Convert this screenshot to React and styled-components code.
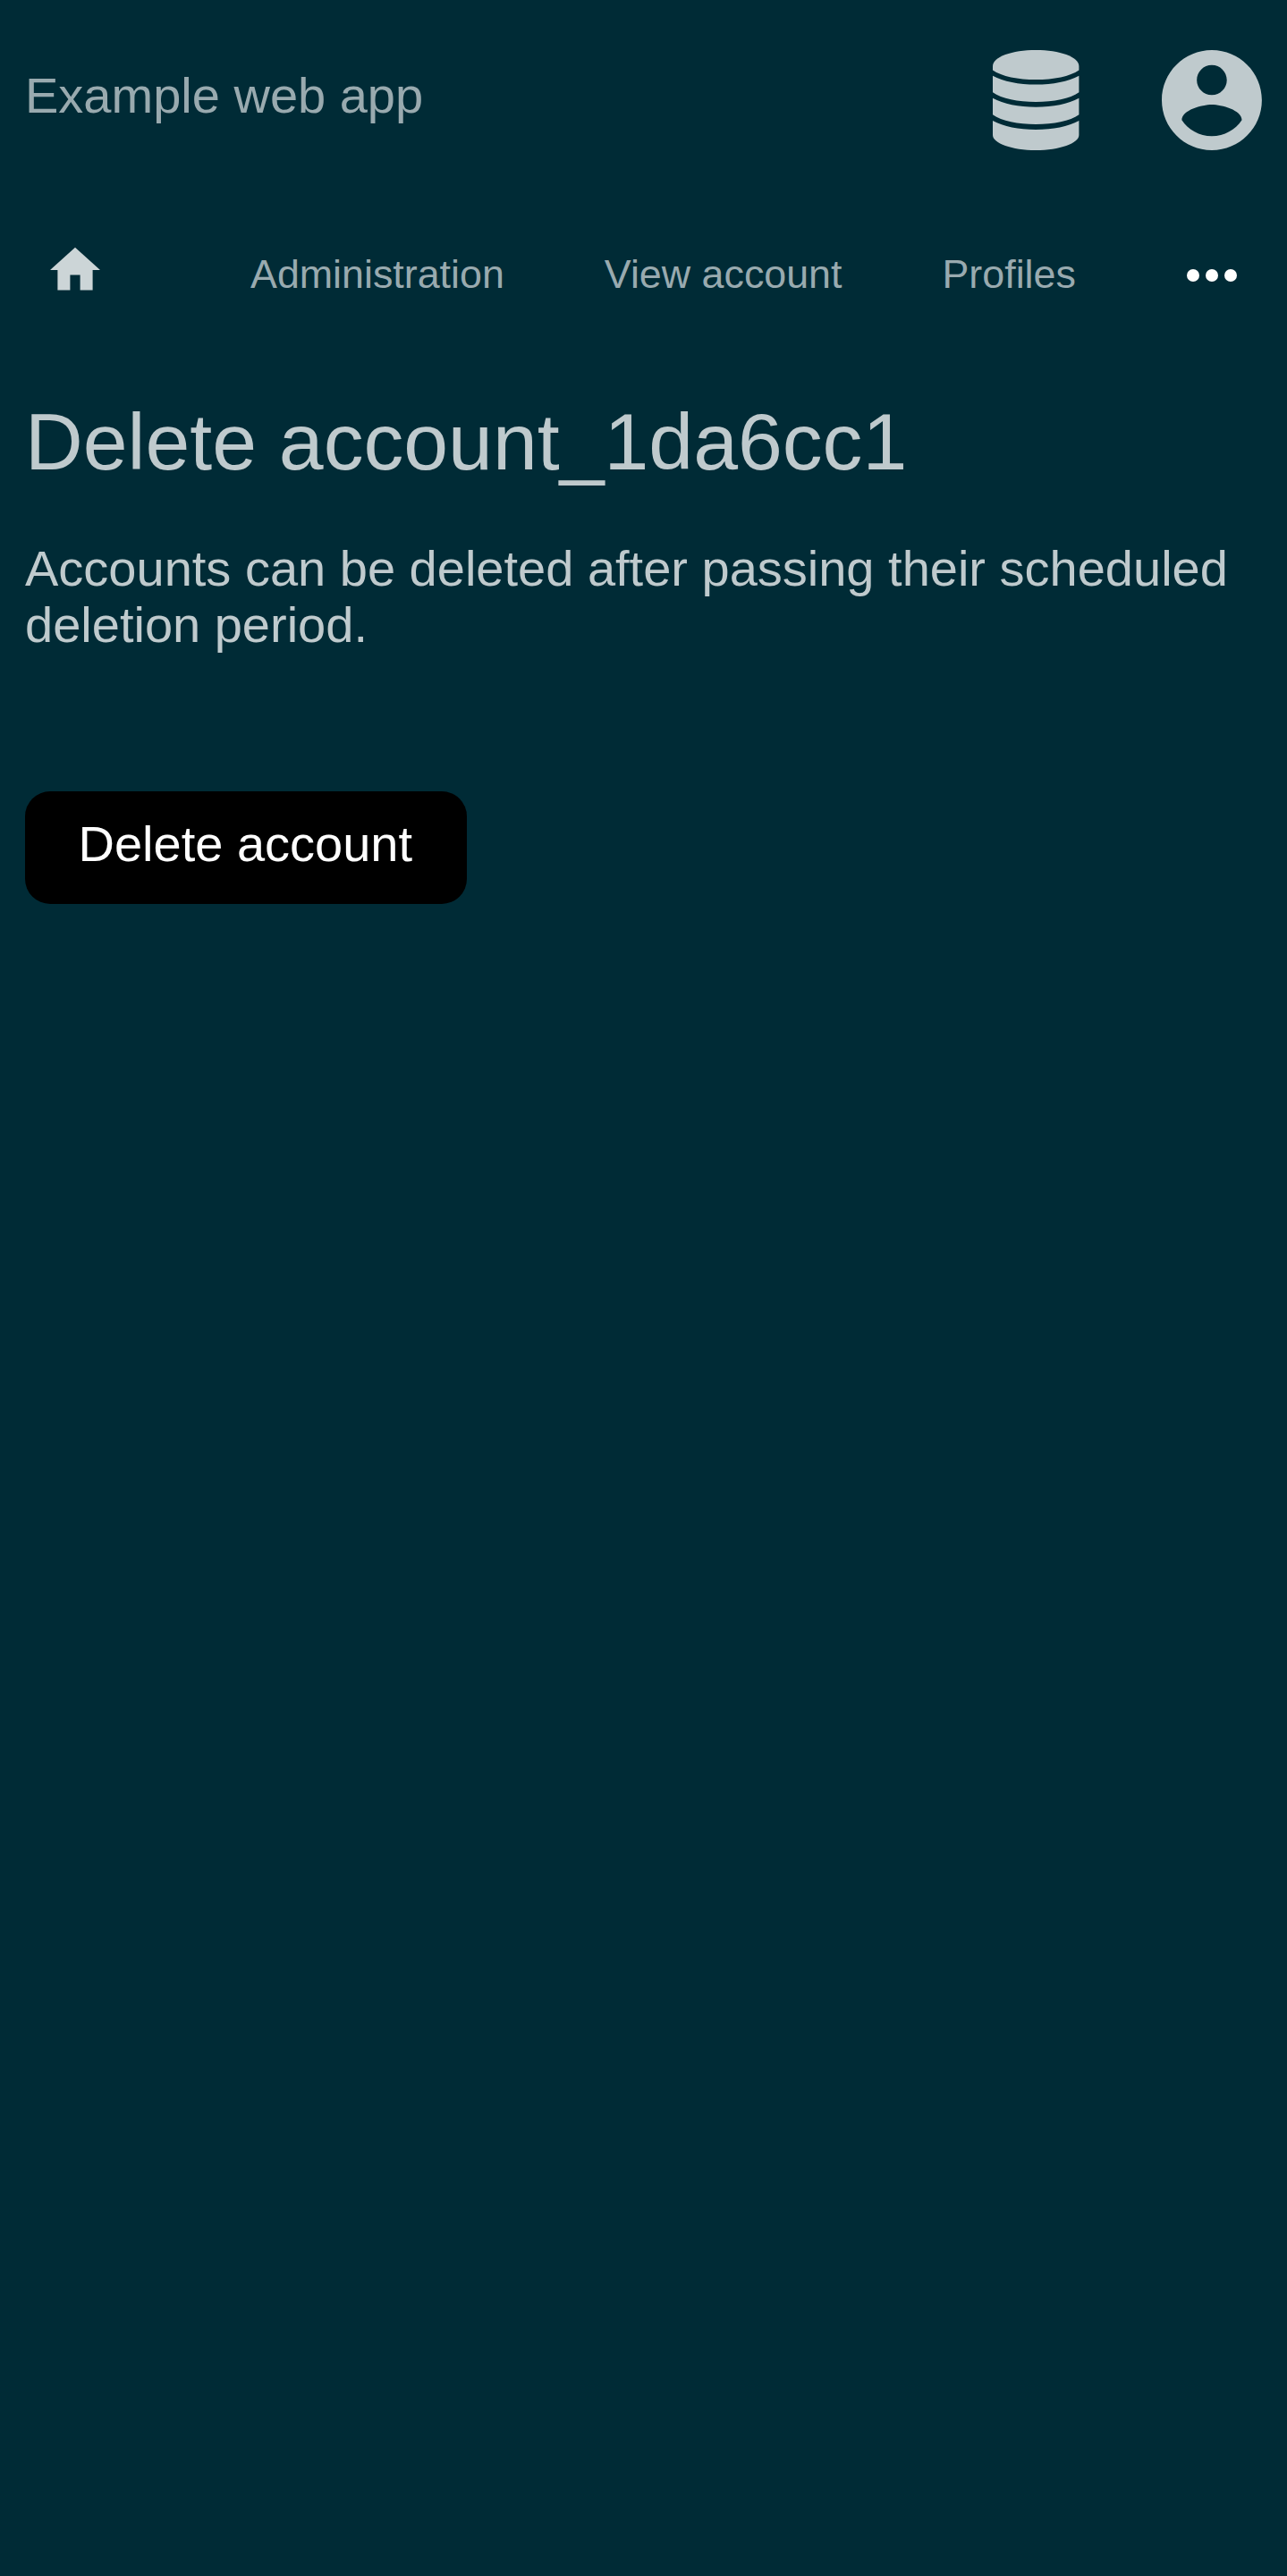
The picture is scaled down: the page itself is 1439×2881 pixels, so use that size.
import React from 'react';
import styled, { createGlobalStyle } from 'styled-components';

const GlobalStyle = createGlobalStyle`
  body {
    margin: 0;
    background: #002b36;
    color: #bfcacd;
    font-family: "Liberation Sans", Arial, sans-serif;
    font-size: 56px;
    line-height: 63px;
  }
`;

const Page = styled.div`
  min-height: 2881px;
  box-sizing: border-box;
`;

const Header = styled.header`
  display: flex;
  align-items: flex-start;
  justify-content: space-between;
  height: 224px;
  padding: 56px 28.3px 56px 28px;
  box-sizing: border-box;
`;

const Brand = styled.a`
  margin-top: 19px;
  color: #99aaaf;
`;

const HeaderActions = styled.div`
  display: flex;
  gap: 92.2px;
`;

const Icon = styled.svg`
  display: block;
  width: ${(p) => p.$width}px;
  height: ${(p) => p.$height}px;
  fill: ${(p) => p.$color || '#bfcacd'};
`;

const Nav = styled.nav`
  display: flex;
  align-items: flex-start;
  height: 168px;
  padding: 50px 56.3px 0 56px;
  box-sizing: border-box;
  font-size: 44.8px;
  line-height: 50px;
`;

const HomeLink = styled.a`
  margin-right: 168px;
`;

const NavLinks = styled.div`
  display: flex;
  gap: 112px;
  margin-top: 7px;
`;

const NavLink = styled.a`
  color: #99aaaf;
  white-space: nowrap;
`;

const MoreButton = styled.button`
  margin: 6px 0 0 auto;
  padding: 0;
  border: 0;
  background: none;
`;

const Main = styled.main`
  padding: 52px 28px 0;
`;

const Title = styled.h1`
  margin: 0 0 60px;
  font-size: 89.6px;
  line-height: 100px;
  font-weight: 400;
`;

const Description = styled.p`
  margin: 0 0 155.4px;
`;

const DeleteButton = styled.button`
  display: block;
  height: 126px;
  padding: 26.6px 60.5px 36.4px 59.5px;
  border: 0;
  border-radius: 28px;
  background: #000;
  color: #fff;
  font: inherit;
`;

const links = ['Administration', 'View account', 'Profiles'];

export default function App() {
  return (
    <Page>
      <GlobalStyle />
      <Header>
        <Brand>Example web app</Brand>
        <HeaderActions>
          <Icon $width={96.4} $height={112} viewBox="0 0 96.4 112">
            <path d="M0 18C0 7.6 21.6 0 48.2 0S96.4 7.6 96.4 18V22.4C86.5 29.3 68 33 48.2 33S9.9 29.3 0 22.4z" />
            <path d="M0 28.7C12 35.2 29 38.5 48.2 38.5S84.4 35.2 96.4 28.7V47.2C86.5 54.2 68 58 48.2 58S9.9 54.2 0 47.2z" />
            <path d="M0 53.8C12 60.4 29 63.7 48.2 63.7S84.4 60.4 96.4 53.8V72.3C86.5 79.3 68 83.1 48.2 83.1S9.9 79.3 0 72.3z" />
            <path d="M0 78.9C12 85.5 29 88.9 48.2 88.9S84.4 85.5 96.4 78.9V95C96.4 104.4 74.8 112 48.2 112S0 104.4 0 95z" />
          </Icon>
          <Icon $width={111.9} $height={111.9} viewBox="2 2 20 20">
            <path d="M12 2C6.48 2 2 6.48 2 12s4.48 10 10 10 10-4.48 10-10S17.52 2 12 2zm0 3c1.66 0 3 1.34 3 3s-1.34 3-3 3-3-1.34-3-3 1.34-3 3-3zm0 14.2c-2.5 0-4.71-1.28-6-3.22.03-1.99 4-3.08 6-3.08 1.99 0 5.97 1.09 6 3.08-1.29 1.94-3.5 3.22-6 3.22z" />
          </Icon>
        </HeaderActions>
      </Header>
      <Nav>
        <HomeLink>
          <Icon $width={56} $height={56} $color="#ccd5d7" viewBox="2 2 20 20">
            <path d="M10 20v-6h4v6h5v-8h3L12 3 2 12h3v8z" />
          </Icon>
        </HomeLink>
        <NavLinks>
          {links.map((label) => (
            <NavLink key={label}>{label}</NavLink>
          ))}
        </NavLinks>
        <MoreButton aria-label="More">
          <Icon $width={56} $height={56} $color="#fff" viewBox="0 0 16 16">
            <circle cx="2" cy="8" r="2" />
            <circle cx="8" cy="8" r="2" />
            <circle cx="14" cy="8" r="2" />
          </Icon>
        </MoreButton>
      </Nav>
      <Main>
        <Title>Delete account_1da6cc1</Title>
        <Description>
          Accounts can be deleted after passing their scheduled deletion period.
        </Description>
        <DeleteButton>Delete account</DeleteButton>
      </Main>
    </Page>
  );
}
